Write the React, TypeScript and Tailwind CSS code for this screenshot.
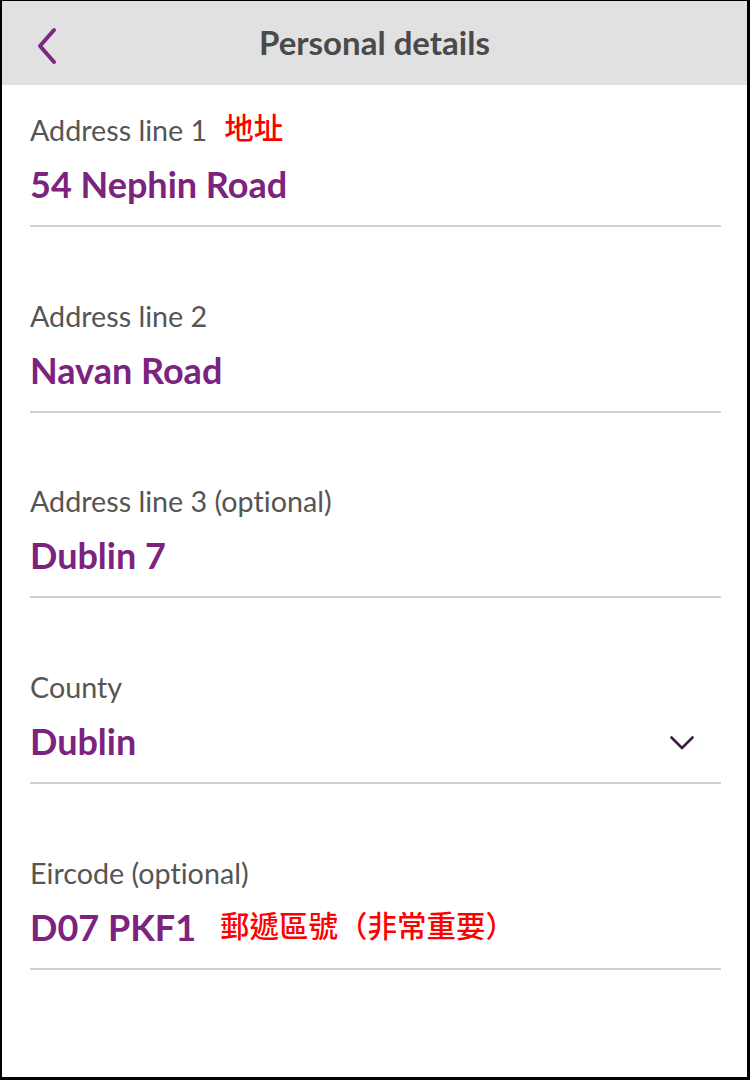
import { ReactNode } from 'react'

const LATO = { fontFamily: 'Lato, "Noto Sans", sans-serif' }

interface Field {
  label: string
  value: string
  note?: string
  noteValue?: string
  select?: boolean
}

const FIELDS: Field[] = [
  { label: 'Address line 1', value: '54 Nephin Road', note: '地址' },
  { label: 'Address line 2', value: 'Navan Road' },
  { label: 'Address line 3 (optional)', value: 'Dublin 7' },
  { label: 'County', value: 'Dublin', select: true },
  { label: 'Eircode (optional)', value: 'D07 PKF1', noteValue: '郵遞區號（非常重要）' },
]

function Note({ children, className }: { children: ReactNode; className: string }) {
  return (
    <span
      className={'text-[#ff0000] text-[29.5px] leading-none font-medium ' + className}
      style={{ fontFamily: '"Noto Sans CJK TC", "Noto Sans CJK SC", sans-serif' }}
    >
      {children}
    </span>
  )
}

function FieldRow({ f, first }: { f: Field; first: boolean }) {
  return (
    <div className={first ? 'pt-[30px]' : 'pt-[73.7px]'}>
      <div className="flex items-center h-[30px]">
        <span className="text-[28.7px] leading-[30px] text-[#555555]">{f.label}</span>
        {f.note && <Note className="ml-[17px] -mt-[6px]">{f.note}</Note>}
      </div>
      <div className="flex items-center h-[40px] mt-[19px] pr-[27px]">
        <span className="text-[36px] leading-[40px] font-bold text-[#7b237e]">{f.value}</span>
        {f.noteValue && <Note className="ml-[24px] -mt-[4px]">{f.noteValue}</Note>}
        {f.select && (
          <svg className="ml-auto mt-[4px]" width="24" height="14" viewBox="0 0 24 14" fill="none">
            <path d="M1.5 1.5 L12 12 L22.5 1.5" stroke="#3b1d42" strokeWidth="2.6" strokeLinecap="round" strokeLinejoin="round" />
          </svg>
        )}
      </div>
      <div className="mt-[21px] h-[2px] bg-[#d2d2d2]" />
    </div>
  )
}

export default function App() {
  return (
    <div
      className="w-[750px] h-[1080px] bg-white border-l-2 border-t border-r-[3px] border-b-[3px] border-black flex flex-col [font-variant-ligatures:none]"
      style={LATO}
    >
      <div className="relative h-[84px] bg-[#e1e1e1] flex items-center justify-center">
        <svg className="absolute left-[34px] top-[26px]" width="22" height="38" viewBox="0 0 22 38" fill="none">
          <path d="M18 3 L4 19 L18 35" stroke="#7b2a80" strokeWidth="4" strokeLinecap="round" strokeLinejoin="round" />
        </svg>
        <h1 className="text-[33px] font-bold text-[#4a4a4a]">Personal details</h1>
      </div>
      <div className="pl-[28px] pr-[26px]">
        {FIELDS.map((f, i) => (
          <FieldRow key={f.label} f={f} first={i === 0} />
        ))}
      </div>
    </div>
  )
}
